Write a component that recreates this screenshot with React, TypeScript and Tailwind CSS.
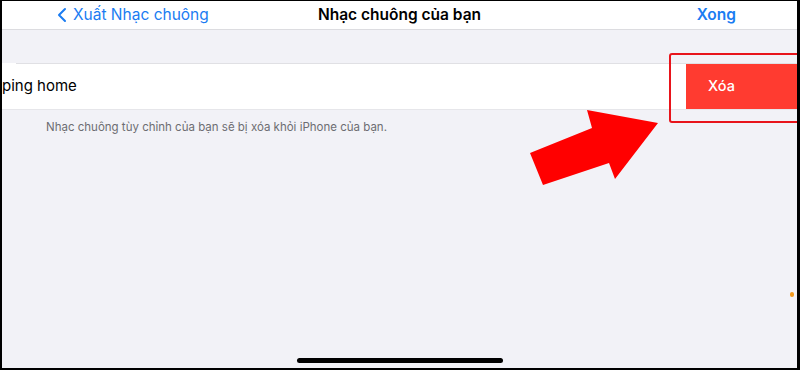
import React from 'react';

const font = { fontFamily: 'Inter, "Noto Sans", "Liberation Sans", sans-serif' };

export default function App() {
  return (
    <div
      className="relative w-[800px] h-[370px] overflow-hidden bg-[#f2f2f7] border-l-2 border-t border-r-[3px] border-b-2 border-black"
      style={font}
    >
      {/* nav bar */}
      <div className="h-[29px] bg-white border-b border-[#dcdce0] grid grid-cols-[1fr_auto_1fr] items-center">
        <div className="flex items-center pl-[54px] text-[#1a7cf2] text-[15.5px]">
          <svg width="12" height="16" viewBox="0 0 12 16" className="mr-[5px]">
            <path d="M9 2 L3 8 L9 14" fill="none" stroke="#1a7cf2" strokeWidth="2" strokeLinecap="round" strokeLinejoin="round" />
          </svg>
          <span>Xuất Nhạc chuông</span>
        </div>
        <div className="text-[15.5px] font-semibold text-black">Nhạc chuông của bạn</div>
        <div className="flex justify-end pr-[61px] text-[15.5px] font-semibold text-[#1a7cf2]">Xong</div>
      </div>

      {/* section spacing */}
      <div className="h-[33px]" />

      {/* row */}
      <div className="relative bg-white h-[46px] flex items-stretch">
        <div className="absolute top-0 left-[14px] right-0 h-px bg-[#e0e0e4]" />
        <div className="flex-1 flex items-center text-[15px] text-black">ping home</div>
        <div className="w-[111px] bg-[#ff3b30] flex items-center pl-[22px] text-white text-[14.5px] font-medium">Xóa</div>
      </div>
      <div className="h-px bg-[#e6e6ea]" />

      {/* footer */}
      <div className="pl-[44px] pt-[9px] text-[11.5px] text-[#6d6d72]">
        Nhạc chuông tùy chỉnh của bạn sẽ bị xóa khỏi iPhone của bạn.
      </div>

      {/* annotation: red outline */}
      <div className="absolute left-[667px] top-[52px] w-[140px] h-[70px] border-2 border-[#e8141b] rounded-[3px]" />

      {/* annotation: arrow */}
      <svg className="absolute left-0 top-0" width="800" height="370" viewBox="0 0 800 370">
        <polygon points="528,152 590,127 585,109 656,122 613,178 607,162 541,184" fill="#ff0000" />
      </svg>

      {/* orange dot */}
      <div className="absolute left-[788px] top-[291px] w-[4px] h-[5px] rounded-full bg-[#f39a1e]" />

      {/* home indicator */}
      <div className="absolute left-[295px] top-[357px] w-[206px] h-[5px] rounded-full bg-black" />
    </div>
  );
}
